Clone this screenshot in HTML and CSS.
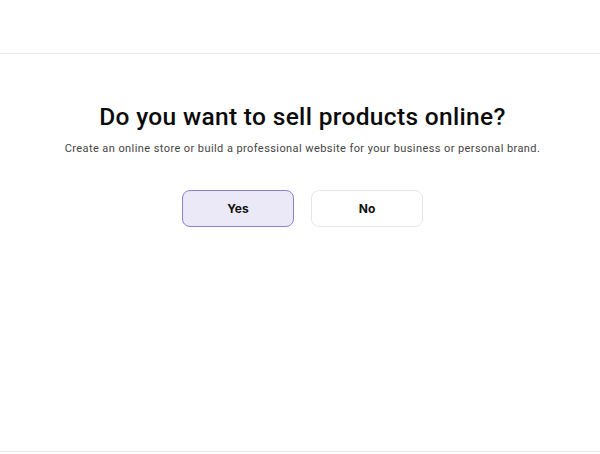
FILE: index.html
```html
<!DOCTYPE html>
<html>
<head>
<meta charset="utf-8">
<link rel="stylesheet" href="styles.css">
</head>
<body>
<div class="page">
  <header class="topbar"></header>
  <main class="content">
    <h1 class="title">Do you want to sell products online?</h1>
    <p class="subtitle">Create an online store or build a professional website for your business or personal brand.</p>
    <div class="choices">
      <button class="choice selected">Yes</button>
      <button class="choice">No</button>
    </div>
  </main>
  <footer class="bottombar"></footer>
</div>
</body>
</html>
```
FILE: styles.css
```css
* { box-sizing: border-box; }
html, body { margin: 0; padding: 0; background: #fff; }
body { font-family: Roboto, "Liberation Sans", sans-serif; color: #111; }
.page { width: 600px; height: 454px; display: flex; flex-direction: column; }
.topbar { height: 54px; border-bottom: 1px solid #e8e8e8; flex: none; }
.content { flex: 1; display: flex; flex-direction: column; align-items: center; padding: 49px 0 0 5px; }
.title { margin: 0; font-size: 24.5px; font-weight: 500; line-height: 28px; color: #0b0b0b; letter-spacing: 0.33px; }
.subtitle { margin: 11px 0 0; font-size: 11px; line-height: 14px; color: #444; letter-spacing: 0.42px; }
.choices { display: flex; gap: 17px; margin-top: 34px; }
.choice { width: 112px; height: 37px; border-radius: 8px; border: 1px solid #e6e6e6; background: #fff; font-family: Inter, Roboto, sans-serif; font-weight: 700; font-size: 12px; color: #111; cursor: pointer; }
.choice.selected { background: #ebe9f8; border-color: #8a82cc; }
.bottombar { height: 3px; border-top: 1px solid #e6e6e6; flex: none; }
```
